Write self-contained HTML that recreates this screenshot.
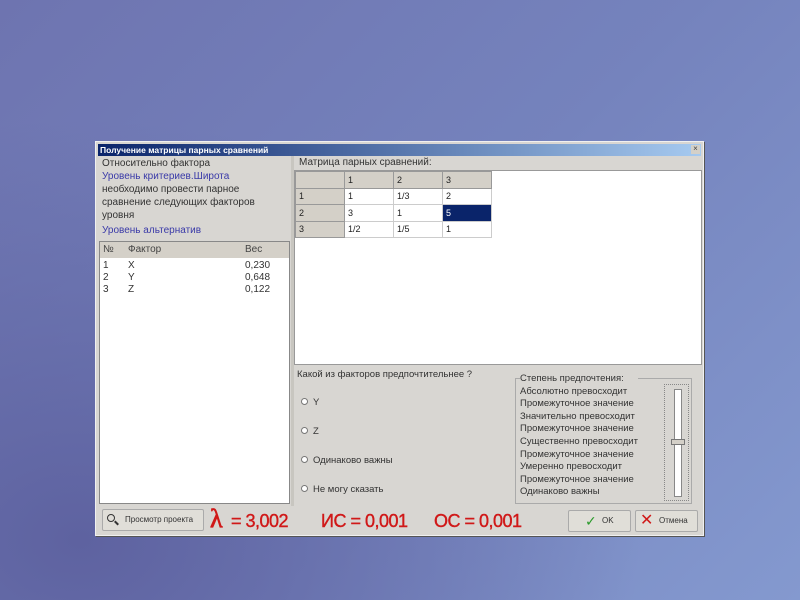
<!DOCTYPE html>
<html><head><meta charset="utf-8"><style>
*{margin:0;padding:0;box-sizing:border-box}
body{width:800px;height:600px;overflow:hidden;position:relative;font-family:"Liberation Sans","DejaVu Sans",sans-serif;font-size:10px;
background:radial-gradient(ellipse at 10% 90%,#5e62a0 0%,rgba(94,98,160,0) 55%),linear-gradient(135deg,#6e74b0 0%,#7583bd 50%,#8499cf 100%);}
.a{position:absolute}
.dlg{left:95px;top:141px;width:609px;height:395px;background:#d8d6d2;border:1px solid #f0f0f0;box-shadow:1px 1px 0 #555}
.title{left:2px;top:2px;width:603px;height:12px;background:linear-gradient(90deg,#0a246a,#a6caf0);color:#fff;font-weight:bold;font-size:8.5px;line-height:12px;padding-left:2px}
.blue{color:#3a3aa8}
.t{font-size:10px;line-height:13px;color:#333}
table{border-collapse:collapse;font-size:9px}
td{height:16.5px;width:49px;border:1px solid #ccc;padding-left:3px;background:#fff;color:#222}
td.h{background:#d4d0c8;border:1px solid #999}
.red{color:#d01818;font-size:18px;letter-spacing:-0.5px;-webkit-text-stroke:0.4px #d01818}
.btn{background:#e0ded8;border:1px solid #aaa;border-radius:2px;font-size:8px;color:#333}
.rb{width:7px;height:7px;border-radius:50%;border:1px solid #777;background:#fff;display:inline-block;margin-right:5px}
</style></head><body>
<div class="a dlg">
 <div class="a title">Получение матрицы парных сравнений</div>
 <div class="a" style="right:3px;top:3px;width:9px;height:9px;background:#d4d0c8;font-size:8px;line-height:8px;text-align:center;color:#444">×</div>
 <div class="a t" style="left:6px;top:15px;width:180px">Относительно фактора<br><span class="blue">Уровень критериев.Широта</span><br>необходимо провести парное<br>сравнение следующих факторов<br>уровня<br><span class="blue" style="display:block;margin-top:2px">Уровень альтернатив</span></div>
 <div class="a" style="left:3px;top:99px;width:191px;height:263px;background:#fff;border:1px solid #888">
  <div style="height:16px;background:#d4d0c8;position:relative;font-size:10px;color:#444;line-height:16px">
   <span class="a" style="left:3px">№</span><span class="a" style="left:28px">Фактор</span><span class="a" style="left:145px">Вес</span></div>
  <div class="a t" style="left:3px;top:18px;line-height:12px">1<br>2<br>3</div>
  <div class="a t" style="left:28px;top:18px;line-height:12px">X<br>Y<br>Z</div>
  <div class="a t" style="left:145px;top:18px;line-height:12px">0,230<br>0,648<br>0,122</div>
 </div>
 <div class="a" style="left:195px;top:14px;width:3px;height:350px;background:#c8c6c0"></div>
 <div class="a t" style="left:203px;top:14px">Матрица парных сравнений:</div>
 <div class="a" style="left:198px;top:28px;width:408px;height:195px;background:#fff;border:1px solid #999">
  <table><tr><td class="h"></td><td class="h">1</td><td class="h">2</td><td class="h">3</td></tr>
  <tr><td class="h">1</td><td>1</td><td>1/3</td><td>2</td></tr>
  <tr><td class="h">2</td><td>3</td><td>1</td><td style="background:#0a246a;color:#fff">5</td></tr>
  <tr><td class="h">3</td><td>1/2</td><td>1/5</td><td>1</td></tr></table>
 </div>
 <div class="a t" style="left:201px;top:226px;font-size:9.5px">Какой из факторов предпочтительнее ?</div>
 <div class="a t" style="left:205px;top:246px;font-size:9.5px;line-height:29px"><span class="rb"></span>Y<br><span class="rb"></span>Z<br><span class="rb"></span>Одинаково важны<br><span class="rb"></span>Не могу сказать</div>
 <div class="a" style="left:419px;top:236px;width:177px;height:126px;border:1px solid #aaa"></div>
 <div class="a blue t" style="left:424px;top:231px;font-size:9.5px;line-height:12.6px;background:#d8d6d2">Степень предпочтения:<br>Абсолютно превосходит<br>Промежуточное значение<br>Значительно превосходит<br>Промежуточное значение<br>Существенно превосходит<br>Промежуточное значение<br>Умеренно превосходит<br>Промежуточное значение<br>Одинаково важны</div>
 <div class="a" style="left:568px;top:242px;width:25px;height:117px;border:1px dotted #888"></div>
 <div class="a" style="left:578px;top:247px;width:8px;height:108px;background:#fff;border:1px solid #888"></div>
 <div class="a" style="left:575px;top:297px;width:14px;height:6px;background:#d4d0c8;border:1px solid #777"></div>
 <div class="a btn" style="left:6px;top:367px;width:102px;height:22px;line-height:20px;padding-left:22px">Просмотр проекта</div>
 <div class="a" style="left:11px;top:372px;width:8px;height:8px;border:1.5px solid #333;border-radius:50%"></div>
 <div class="a" style="left:18px;top:380px;width:5px;height:2px;background:#333;transform:rotate(45deg)"></div>
 <div class="a red" style="left:114px;top:362px;font-size:26px;font-family:'Liberation Serif',serif;-webkit-text-stroke:0.8px #d01818">λ</div>
 <div class="a red" style="left:135px;top:369px">= 3,002</div>
 <div class="a red" style="left:225px;top:369px">ИС = 0,001</div>
 <div class="a red" style="left:338px;top:369px">ОС = 0,001</div>
 <div class="a btn" style="left:472px;top:368px;width:63px;height:22px;line-height:20px;padding-left:33px">OK</div>
 <div class="a" style="left:489px;top:371px;color:#2a9a2a;font-size:14px">✓</div>
 <div class="a btn" style="left:539px;top:368px;width:63px;height:22px;line-height:20px;padding-left:23px">Отмена</div>
 <div class="a" style="left:544px;top:368px;color:#d01818;font-size:16px">✕</div>
</div>
</body></html>
